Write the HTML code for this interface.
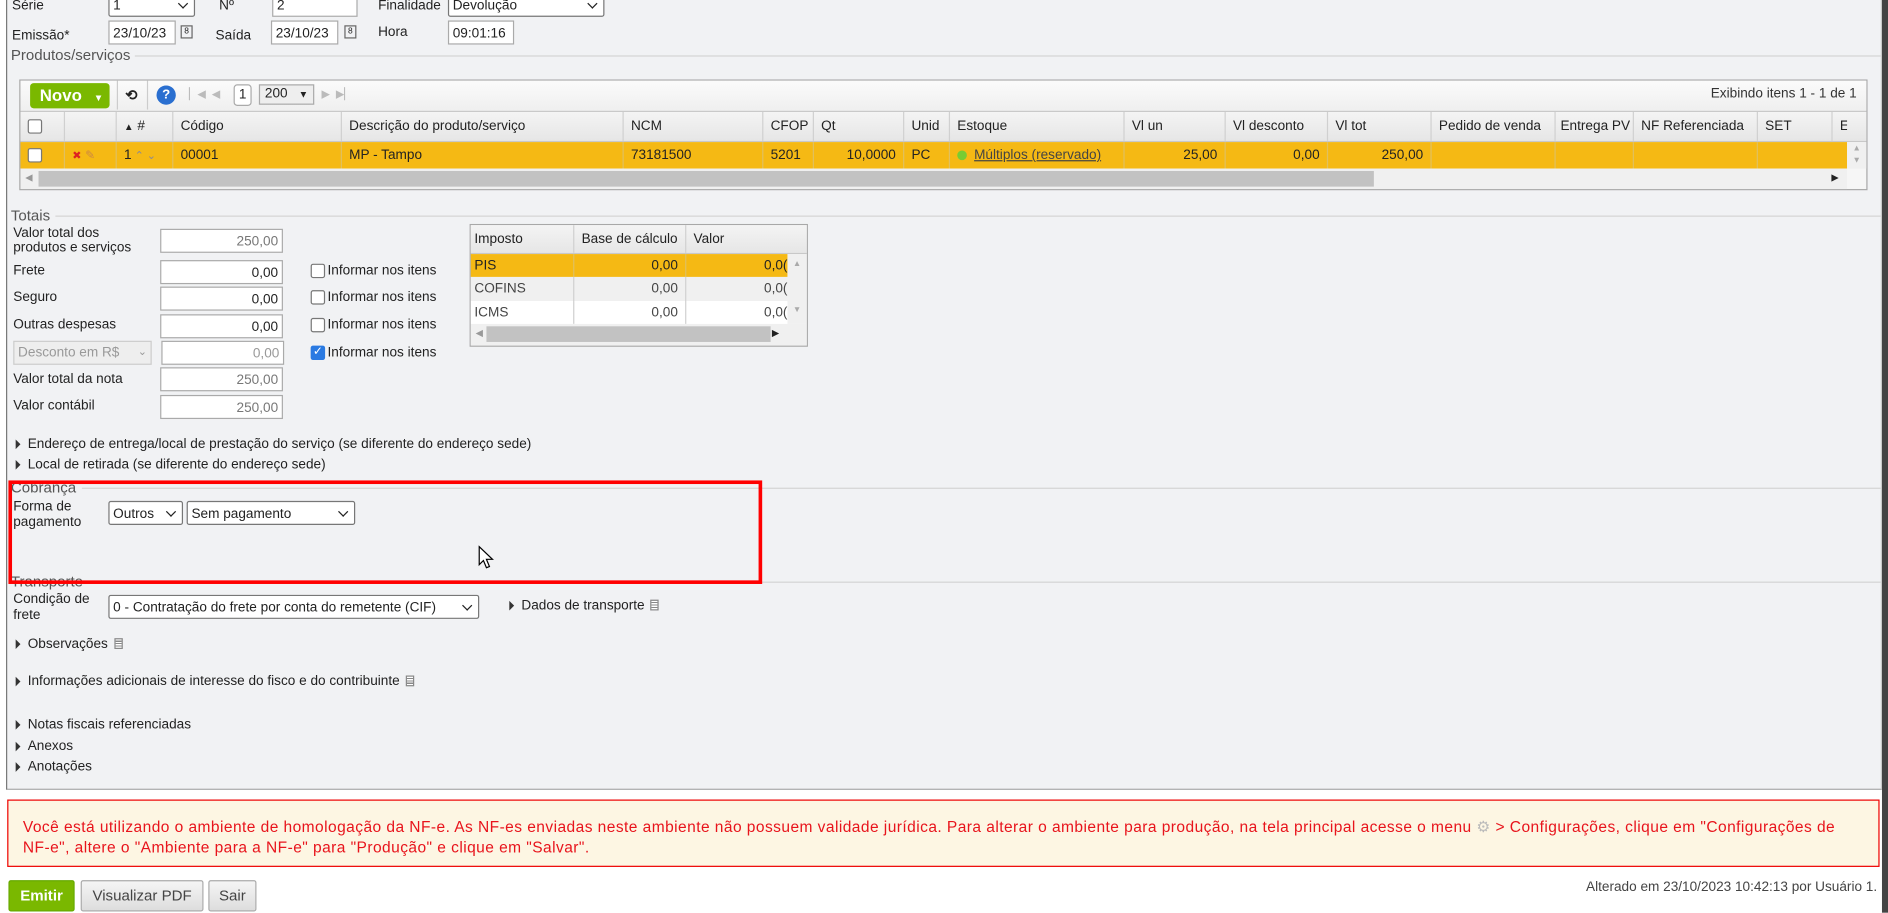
<!DOCTYPE html>
<html><head><meta charset="utf-8">
<style>
*{box-sizing:border-box;margin:0;padding:0}
html,body{width:1888px;height:912px;overflow:hidden;background:#fff}
#w{position:absolute;left:0;top:0;width:1568px;height:758px;transform:scale(1.20408);transform-origin:0 0;font-family:"Liberation Sans",sans-serif;font-size:11.3px;color:#222}
.a{position:absolute;white-space:nowrap}
.panel{position:absolute;left:5px;top:0;width:1558px;height:656px;background:#f1f2f4;border-left:1px solid #777;border-bottom:1px solid #aaa;border-right:1px solid #ccc}
.inp{position:absolute;background:#fff;border:1px solid #aaa;height:20px;padding:3px 3px 0;line-height:14px;font-size:11.3px}
.sel{position:absolute;background:#fff;border:1px solid #777;border-radius:2px;height:20px;padding:3px 3px 0;line-height:14px;font-size:11.3px}
.sel:after{content:"";position:absolute;right:6px;top:5px;width:5px;height:5px;border-right:1.5px solid #222;border-bottom:1.5px solid #222;transform:rotate(45deg)}
.r{text-align:right}
.g{color:#777}
.leg{position:absolute;font-size:12.5px;color:#555}
.line{position:absolute;height:1px;background:#d4d4d4}
.tri{display:inline-block;width:0;height:0;border-left:4px solid #333;border-top:4px solid transparent;border-bottom:4px solid transparent;margin-right:6px;vertical-align:-1px}
.cb{position:absolute;width:12px;height:12px;border:1px solid #777;border-radius:2px;background:#fff}
.grid{position:absolute;border:1px solid #a8a8a8;background:#fff}
.hd{position:absolute;background:linear-gradient(#f4f4f4,#e6e6e6);border-bottom:1px solid #c8c8c8}
.c{position:absolute;top:0;height:100%;border-left:1px solid #d0d0d0;padding:0 6px;display:flex;align-items:center;white-space:nowrap;overflow:hidden}
.doc{display:inline-block;width:7px;height:9px;border:1px solid #888;background:repeating-linear-gradient(#fff 0 1px,#888 1px 2px);margin-left:5px;vertical-align:-1px}
.btn{position:absolute;border:1px solid #aaa;border-radius:2px;background:linear-gradient(#f5f5f5,#ddd);font-size:12.5px;color:#444;display:flex;align-items:center;justify-content:center}
</style></head><body><div id="w">
<div class="panel"></div>
<div style="position:absolute;left:1563px;top:0;width:5px;height:758px;background:#444"></div>

<div class="a" style="left:10px;top:-1px">Série</div>
<div class="sel" style="left:90px;top:-6px;width:72px">1</div>
<div class="a" style="left:182px;top:-1px">Nº</div>
<div class="inp" style="left:226px;top:-6px;width:71px">2</div>
<div class="a" style="left:314px;top:-1px">Finalidade</div>
<div class="sel" style="left:372px;top:-6px;width:130px">Devolução</div>

<div class="a" style="left:10px;top:24px">Emissão*</div>
<div class="inp" style="left:90px;top:17px;width:56px">23/10/23</div>
<div class="a" style="left:150px;top:21px;width:10px;height:11px;border:1px solid #666;font-size:7px;text-align:center;line-height:10px">8</div>
<div class="a" style="left:179px;top:24px">Saída</div>
<div class="inp" style="left:225px;top:17px;width:56px">23/10/23</div>
<div class="a" style="left:286px;top:21px;width:10px;height:11px;border:1px solid #666;font-size:7px;text-align:center;line-height:10px">8</div>
<div class="a" style="left:314px;top:21px">Hora</div>
<div class="inp" style="left:372px;top:17px;width:55px">09:01:16</div>

<div class="leg" style="left:9px;top:39px">Produtos/serviços</div>
<div class="line" style="left:112px;top:46px;width:1450px"></div>

<div class="grid" style="left:16px;top:66px;width:1535px;height:92px;background:#f6f6f6">
 <div class="a" style="left:0;top:0;width:1533px;height:25px;background:linear-gradient(#fbfbfb,#efefef)"></div>
 <div class="a" style="left:8px;top:2px;width:66px;height:21px;background:#7ab800;border-radius:3px;color:#fff;font-weight:bold;font-size:14px;padding:2px 0 0 8px">Novo <span style="font-size:8px;margin-left:6px">▼</span></div>
 <div class="a" style="left:80px;top:0;height:24px;border-left:1px solid #ccc"></div>
 <div class="a" style="left:87px;top:5px;font-weight:bold;font-size:12px">⟲</div>
 <div class="a" style="left:105px;top:0;height:24px;border-left:1px solid #ccc"></div>
 <div class="a" style="left:113px;top:4px;width:16px;height:16px;border-radius:50%;background:#2a6fd0;color:#fff;font-weight:bold;font-size:11px;text-align:center;line-height:16px">?</div>
 <div class="a" style="left:140px;top:6px;color:#bbb;font-size:9px">▏◀ &nbsp;◀</div>
 <div class="a" style="left:177px;top:3px;width:15px;height:18px;border:1px solid #aaa;border-radius:3px;background:#fff;text-align:center;line-height:16px">1</div>
 <div class="a" style="left:198px;top:3px;width:46px;height:17px;border:1px solid #aaa;background:#eee;padding:1px 4px">200 <span style="font-size:8px;margin-left:6px">▼</span></div>
 <div class="a" style="left:250px;top:6px;color:#bbb;font-size:9px">▶ &nbsp;▶▏</div>
 <div class="a" style="right:8px;top:5px;color:#333">Exibindo itens 1 - 1 de 1</div>
 <div class="hd" style="left:0;top:25px;width:1533px;height:26px;border-top:1px solid #c8c8c8">
  <div class="c" style="left:0;width:36px;border:0"><div class="cb" style="position:static"></div></div>
  <div class="c" style="left:36px;width:43px"></div>
  <div class="c" style="left:79px;width:47px"><span style="font-size:8px">▲</span>&nbsp;#</div>
  <div class="c" style="left:126px;width:140px">Código</div>
  <div class="c" style="left:266px;width:234px">Descrição do produto/serviço</div>
  <div class="c" style="left:500px;width:116px">NCM</div>
  <div class="c" style="left:616px;width:42px">CFOP</div>
  <div class="c" style="left:658px;width:75px">Qt</div>
  <div class="c" style="left:733px;width:38px">Unid</div>
  <div class="c" style="left:771px;width:145px">Estoque</div>
  <div class="c" style="left:916px;width:84px">Vl un</div>
  <div class="c" style="left:1000px;width:85px">Vl desconto</div>
  <div class="c" style="left:1085px;width:86px">Vl tot</div>
  <div class="c" style="left:1171px;width:103px">Pedido de venda</div>
  <div class="c" style="left:1274px;width:65px;padding:0 4px">Entrega PV</div>
  <div class="c" style="left:1339px;width:103px">NF Referenciada</div>
  <div class="c" style="left:1442px;width:62px">SET</div>
  <div class="c" style="left:1504px;width:13px">E</div>
 </div>
 <div class="a" style="left:0;top:51px;width:1517px;height:22px;background:#f5b914">
  <div class="c" style="left:0;width:36px;border:0"><div class="cb" style="position:static"></div></div>
  <div class="c" style="left:36px;width:43px;border-color:#e0c060"><span style="color:#d22;font-size:9px">✖</span>&nbsp;<span style="color:#c84;font-size:10px">✎</span></div>
  <div class="c" style="left:79px;width:47px;border-color:#e0c060">1 <span style="color:#889;font-size:9px">&nbsp;⌃ ⌄</span></div>
  <div class="c" style="left:126px;width:140px;border-color:#e0c060">00001</div>
  <div class="c" style="left:266px;width:234px;border-color:#e0c060">MP - Tampo</div>
  <div class="c" style="left:500px;width:116px;border-color:#e0c060">73181500</div>
  <div class="c" style="left:616px;width:42px;border-color:#e0c060">5201</div>
  <div class="c" style="left:658px;width:75px;border-color:#e0c060;justify-content:flex-end">10,0000</div>
  <div class="c" style="left:733px;width:38px;border-color:#e0c060">PC</div>
  <div class="c" style="left:771px;width:145px;border-color:#e0c060"><span style="display:inline-block;width:8px;height:8px;border-radius:50%;background:#7c3;margin-right:6px"></span><u style="color:#444">Múltiplos (reservado)</u></div>
  <div class="c" style="left:916px;width:84px;border-color:#e0c060;justify-content:flex-end">25,00</div>
  <div class="c" style="left:1000px;width:85px;border-color:#e0c060;justify-content:flex-end">0,00</div>
  <div class="c" style="left:1085px;width:86px;border-color:#e0c060;justify-content:flex-end">250,00</div>
  <div class="c" style="left:1171px;width:103px;border-color:#e0c060"></div>
  <div class="c" style="left:1274px;width:65px;border-color:#e0c060"></div>
  <div class="c" style="left:1339px;width:103px;border-color:#e0c060"></div>
  <div class="c" style="left:1442px;width:62px;border-color:#e0c060"></div>
 </div>
 <div class="a" style="left:1517px;top:51px;width:16px;height:22px;background:#f0f0f0;color:#aaa;font-size:7px;text-align:center;line-height:10px;padding-top:1px">▲<br>▼</div>
 <div class="a" style="left:0;top:73px;width:1517px;height:17px;background:#f0f0f0"></div>
 <div class="a" style="left:15px;top:75px;width:1109px;height:13px;background:#c2c2c2"></div>
 <div class="a" style="left:4px;top:76px;color:#999;font-size:8px">◀</div>
 <div class="a" style="left:1504px;top:76px;color:#222;font-size:8px">▶</div>
</div>

<div class="leg" style="left:9px;top:172px">Totais</div>
<div class="line" style="left:46px;top:179px;width:1516px"></div>

<div class="a" style="left:11px;top:188px;line-height:12px">Valor total dos<br>produtos e serviços</div>
<div class="inp r g" style="left:133px;top:190px;width:102px">250,00</div>
<div class="a" style="left:11px;top:219px">Frete</div>
<div class="inp r" style="left:133px;top:216px;width:102px">0,00</div>
<div class="a" style="left:11px;top:241px">Seguro</div>
<div class="inp r" style="left:133px;top:238px;width:102px">0,00</div>
<div class="a" style="left:11px;top:264px">Outras despesas</div>
<div class="inp r" style="left:133px;top:261px;width:102px">0,00</div>
<div class="a g" style="left:11px;top:283px;width:115px;height:20px;border:1px solid #ccc;background:#eee;padding:3px 3px;color:#999">Desconto em R$ <span style="float:right;font-size:9px">⌄</span></div>
<div class="inp r g" style="left:134px;top:283px;width:102px;color:#999">0,00</div>
<div class="a" style="left:11px;top:309px">Valor total da nota</div>
<div class="inp r g" style="left:133px;top:305px;width:102px">250,00</div>
<div class="a" style="left:11px;top:331px">Valor contábil</div>
<div class="inp r g" style="left:133px;top:328px;width:102px">250,00</div>

<div class="cb" style="left:258px;top:219px"></div><div class="a" style="left:272px;top:219px">Informar nos itens</div>
<div class="cb" style="left:258px;top:241px"></div><div class="a" style="left:272px;top:241px">Informar nos itens</div>
<div class="cb" style="left:258px;top:264px"></div><div class="a" style="left:272px;top:264px">Informar nos itens</div>
<div class="cb" style="left:258px;top:287px;background:#2a7ae2;border-color:#2a7ae2;color:#fff;font-size:10px;line-height:10px;text-align:center">✓</div><div class="a" style="left:272px;top:287px">Informar nos itens</div>

<div class="grid" style="left:390px;top:186px;width:281px;height:102px">
 <div class="hd" style="left:0;top:0;width:279px;height:24px">
  <div class="c" style="left:0;width:85px;border:0;padding:0 3px">Imposto</div>
  <div class="c" style="left:85px;width:93px">Base de cálculo</div>
  <div class="c" style="left:178px;width:85px">Valor</div>
 </div>
 <div class="a" style="left:0;top:24px;width:263px;height:19px;background:#f5b914">
  <div class="c" style="left:0;width:85px;border:0;padding:0 3px">PIS</div>
  <div class="c" style="left:85px;width:93px;justify-content:flex-end;border-color:#e0c060">0,00</div>
  <div class="c" style="left:178px;width:85px;justify-content:flex-end;border-color:#e0c060;padding-right:0">0,0(</div>
 </div>
 <div class="a" style="left:0;top:43px;width:263px;height:20px;background:#f0f0f0;color:#444">
  <div class="c" style="left:0;width:85px;border:0;padding:0 3px">COFINS</div>
  <div class="c" style="left:85px;width:93px;justify-content:flex-end">0,00</div>
  <div class="c" style="left:178px;width:85px;justify-content:flex-end;padding-right:0">0,0(</div>
 </div>
 <div class="a" style="left:0;top:63px;width:263px;height:19px;background:#fff;color:#444">
  <div class="c" style="left:0;width:85px;border:0;padding:0 3px">ICMS</div>
  <div class="c" style="left:85px;width:93px;justify-content:flex-end">0,00</div>
  <div class="c" style="left:178px;width:85px;justify-content:flex-end;padding-right:0">0,0(</div>
 </div>
 <div class="a" style="left:263px;top:24px;width:16px;height:58px;background:#f0f0f0;color:#aaa;font-size:7px;text-align:center;padding-top:5px">▲</div>
 <div class="a" style="left:263px;top:67px;width:16px;color:#aaa;font-size:7px;text-align:center">▼</div>
 <div class="a" style="left:0;top:82px;width:279px;height:18px;background:#f0f0f0"></div>
 <div class="a" style="left:13px;top:84px;width:236px;height:13px;background:#c2c2c2"></div>
 <div class="a" style="left:4px;top:85px;color:#999;font-size:8px">◀</div>
 <div class="a" style="left:250px;top:85px;color:#222;font-size:8px">▶</div>
</div>

<div class="a" style="left:13px;top:363px"><span class="tri"></span>Endereço de entrega/local de prestação do serviço (se diferente do endereço sede)</div>
<div class="a" style="left:13px;top:380px"><span class="tri"></span>Local de retirada (se diferente do endereço sede)</div>

<div class="leg" style="left:9px;top:398px">Cobrança</div>
<div class="line" style="left:68px;top:405px;width:1494px"></div>
<div class="a" style="left:11px;top:415px;line-height:13px">Forma de<br>pagamento</div>
<div class="sel" style="left:90px;top:416px;width:62px">Outros</div>
<div class="sel" style="left:155px;top:416px;width:140px">Sem pagamento</div>

<div class="leg" style="left:9px;top:476px">Transporte</div>
<div class="line" style="left:72px;top:483px;width:1490px"></div>
<div class="a" style="left:11px;top:492px;line-height:13px">Condição de<br>frete</div>
<div class="sel" style="left:90px;top:494px;width:308px">0 - Contratação do frete por conta do remetente (CIF)</div>
<div class="a" style="left:423px;top:497px"><span class="tri"></span>Dados de transporte<span class="doc"></span></div>

<div class="a" style="left:7px;top:399px;width:626px;height:86px;border:3px solid #f00"></div>
<svg class="a" style="left:397px;top:453px" width="14" height="20" viewBox="0 0 14 20"><path d="M1 1 L1 16 L4.5 12.5 L7 18.5 L9.5 17.5 L7 11.5 L12 11.5 Z" fill="#fff" stroke="#000" stroke-width="1"/></svg>

<div class="a" style="left:13px;top:529px"><span class="tri"></span>Observações<span class="doc"></span></div>
<div class="a" style="left:13px;top:560px"><span class="tri"></span>Informações adicionais de interesse do fisco e do contribuinte<span class="doc"></span></div>
<div class="a" style="left:13px;top:596px"><span class="tri"></span>Notas fiscais referenciadas</div>
<div class="a" style="left:13px;top:614px"><span class="tri"></span>Anexos</div>
<div class="a" style="left:13px;top:631px"><span class="tri"></span>Anotações</div>

<div class="a" style="left:6px;top:664px;width:1555px;height:56px;background:#fdf6e3;border:1px solid #e00;color:#e8141c;font-size:12.9px;letter-spacing:0.37px;padding:14px 12px 0 12px;line-height:16.5px;overflow:hidden">Você está utilizando o ambiente de homologação da NF-e. As NF-es enviadas neste ambiente não possuem validade jurídica. Para alterar o ambiente para produção, na tela principal acesse o menu <span style="color:#bbb">⚙</span> &gt; Configurações, clique em "Configurações de<br>NF-e", altere o "Ambiente para a NF-e" para "Produção" e clique em "Salvar".</div>

<div class="btn" style="left:7px;top:731px;width:55px;height:26px;background:#7ab800;border-color:#6a0;color:#fff;font-weight:bold">Emitir</div>
<div class="btn" style="left:67px;top:731px;width:102px;height:26px">Visualizar PDF</div>
<div class="btn" style="left:173px;top:731px;width:40px;height:26px">Sair</div>
<div class="a" style="right:9px;top:731px;color:#444">Alterado em 23/10/2023 10:42:13 por Usuário 1.</div>
</div></body></html>
